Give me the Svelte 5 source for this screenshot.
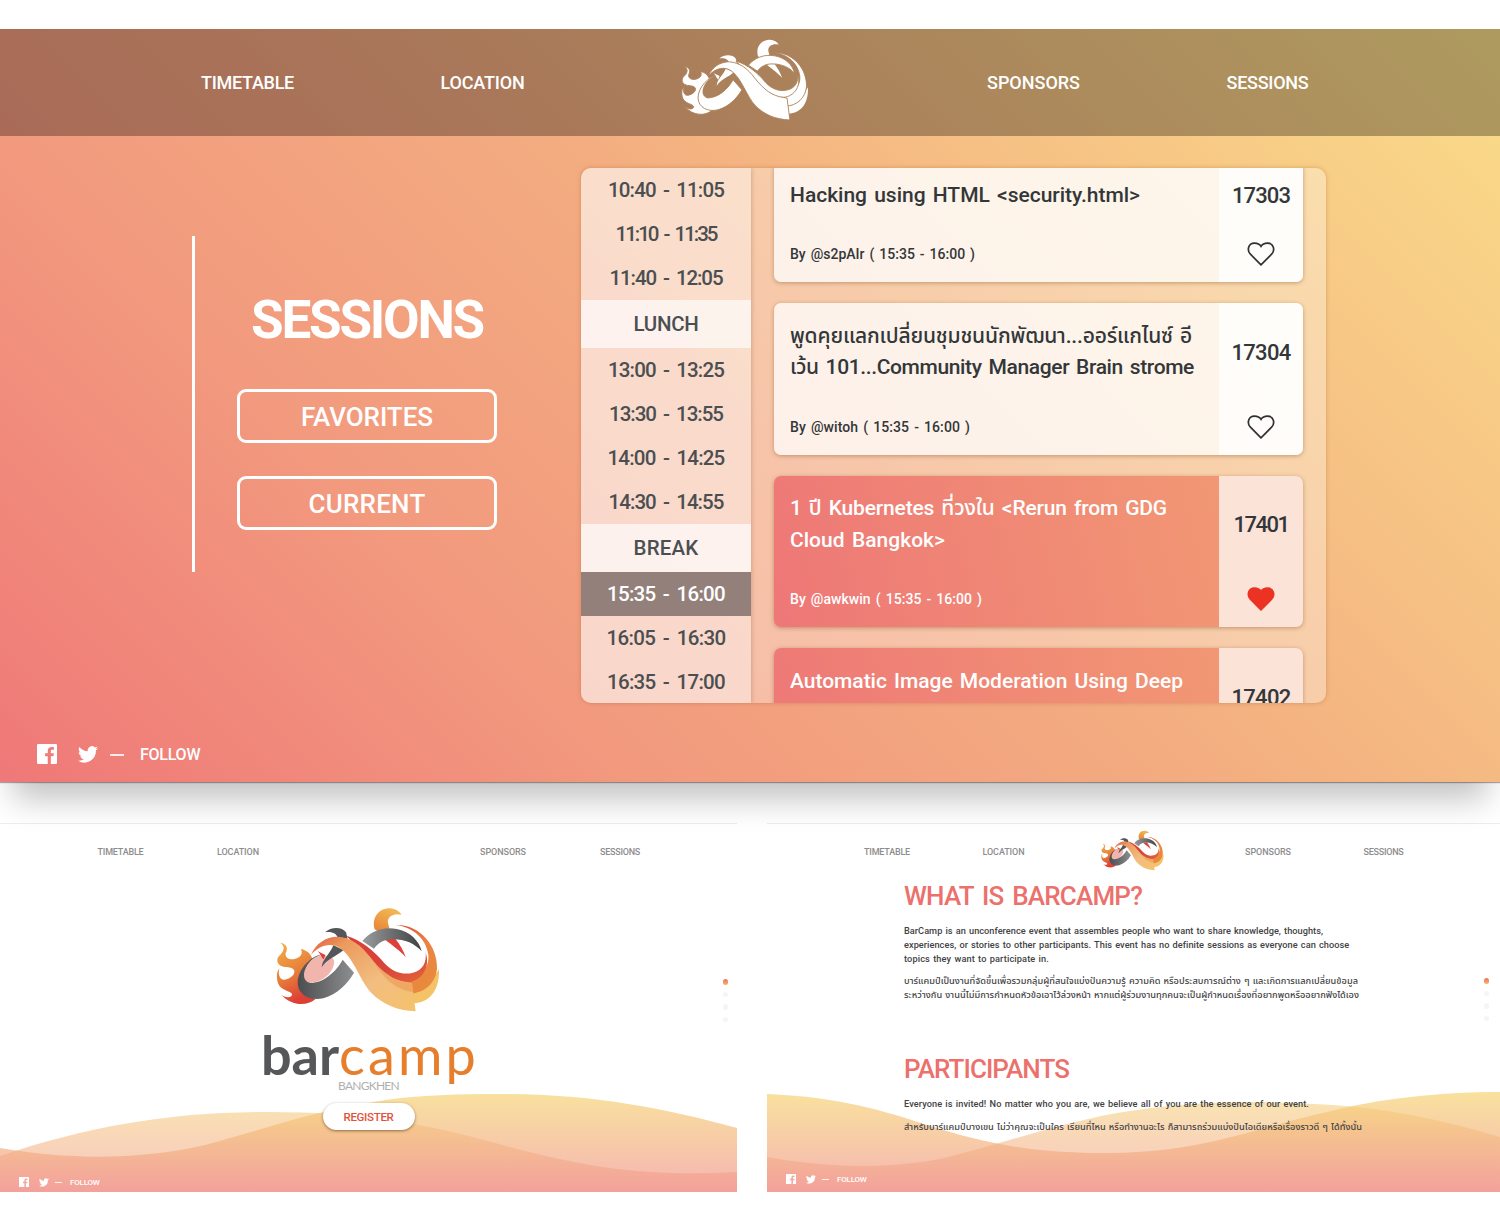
<script>
  const slots = [
    { t: '10:40 - 11:05', w: 116 },
    { t: '11:10 - 11:35', w: 101 },
    { t: '11:40 - 12:05', w: 113 },
    { t: 'LUNCH', w: 65, kind: 'pause' },
    { t: '13:00 - 13:25', w: 116 },
    { t: '13:30 - 13:55', w: 114 },
    { t: '14:00 - 14:25', w: 117 },
    { t: '14:30 - 14:55', w: 115 },
    { t: 'BREAK', w: 65, kind: 'pause' },
    { t: '15:35 - 16:00', w: 118, kind: 'active' },
    { t: '16:05 - 16:30', w: 119 },
    { t: '16:35 - 17:00', w: 118 }
  ];

  const talks = [
    { room: '17303', rw: 58, lines: [['Hacking using HTML <security.html>', 350]], by: 'By @s2pAIr ( 15:35 - 16:00 )', bw: 185 },
    {
      room: '17304', rw: 59,
      lines: [
        ['พูดคุยแลกเปลี่ยนชุมชนนักพัฒนา...ออร์แกไนซ์ อี', 402],
        ['เว้น 101...Community Manager Brain strome', 404]
      ],
      by: 'By @witoh ( 15:35 - 16:00 )', bw: 180
    },
    {
      room: '17401', rw: 55, fav: true,
      lines: [['1 ปี Kubernetes ที่วงใน <Rerun from GDG', 377], ['Cloud Bangkok>', 155]],
      by: 'By @awkwin ( 15:35 - 16:00 )', bw: 192
    },
    {
      room: '17402', rw: 59, fav: true,
      lines: [['Automatic Image Moderation Using Deep', 393]]
    }
  ];

  const about = [
    ['BarCamp is an unconference event that assembles people who want to share knowledge, thoughts,', 419],
    ['experiences, or stories to other participants. This event has no definite sessions as everyone can choose', 445],
    ['topics they want to participate in.', 145]
  ];
  const aboutThai = [
    ['บาร์แคมป์เป็นงานที่จัดขึ้นเพื่อรวมกลุ่มผู้ที่สนใจแบ่งปันความรู้ ความคิด หรือประสบการณ์ต่าง ๆ และเกิดการแลกเปลี่ยนข้อมูล', 454],
    ['ระหว่างกัน งานนี้ไม่มีการกำหนดหัวข้อเอาไว้ล่วงหน้า หากแต่ผู้ร่วมงานทุกคนจะเป็นผู้กำหนดเรื่องที่อยากพูดหรืออยากฟังได้เอง', 455]
  ];

  // Tracks a line of text so that it fills the given width.
  function fit(node, width) {
    const base = node.getBoundingClientRect().width;
    node.style.letterSpacing = '1px';
    const gaps = node.getBoundingClientRect().width - base;
    node.style.letterSpacing = gaps ? `${(width - base) / gaps}px` : '0';
  }
</script>

{#snippet emblem(kind)}
  <svg class="emblem {kind}" viewBox="78 52 492 316">
    <path class="flame" d="M90 158C110 161 115 174 107 190C105 203 118 209 130 208C150 204 160 194 153 177C172 181 182 192 187 206L150 260L158 306L196 328C170 350 122 347 95 315C112 327 128 321 126 312C122 303 100 302 88 287C77 270 79 245 88 235C83 255 91 271 104 269C124 265 137 252 132 240C124 228 104 236 90 226C79 218 79 203 91 194C104 181 105 166 90 158Z" />
    <path class="blush" d="M215 197C240 193 256 204 252 222C244 260 200 283 175 278C156 270 161 240 172 225C185 206 200 199 215 197Z" />
    <path class="ring" d="M226 192C184 192 143 238 143 280C145 316 180 334 220 325C262 312 292 282 312 248L278 209C258 246 220 279 180 279C158 274 157 248 173 223C186 205 205 195 226 192Z" />
    <path class="hook" d="M225 127C243 110 276 110 288 127L293 146L262 141C260 132 246 123 225 127Z" />
    <path class="hook" d="M250 166L281 180C258 200 230 207 215 232C216 208 240 193 250 166Z" />
    <path class="spark" d="M202 183L226 195L221 208C213 203 214 193 202 183Z" />
    <path class="hair" d="M374 118C364 82 388 54 420 55C435 56 449 64 454 74C430 68 411 80 414 99L418 114L390 128Z" />
    <path class="spark" d="M403 147L436 146C450 164 462 184 467 202C453 184 430 169 403 147Z" />
    <path class="gold" d="M567 238C569 305 537 337 492 340L480 288C526 284 551 265 567 238Z" />
    <path class="orange" d="M438 105C510 103 563 168 561 235C558 278 524 310 480 311L440 262C500 272 540 240 535 194C528 146 490 112 438 105Z" />
    <path class="red" d="M289 137C335 151 372 182 402 218C431 250 463 255 489 248C520 240 530 215 527 188C544 236 509 280 462 277C405 271 360 210 289 137Z" />
    <path class="arc" d="M337 153C360 125 398 109 440 117C480 125 507 151 515 184C494 160 462 147 425 148C402 149 385 158 372 176Z" />
    <path class="ribbon" d="M183 195C196 160 230 139 264 140C304 143 334 166 361 202C397 248 430 272 472 277L486 280L497 364C440 362 398 343 365 310C330 274 312 203 270 174C240 155 205 168 183 195Z" />
    <path class="fold" d="M264 140C326 143 358 198 395 250C420 282 450 300 489 307L488 281C430 276 395 247 361 202C334 166 304 143 264 140Z" />
  </svg>
{/snippet}

{#snippet follow()}
  <div class="follow">
    <svg class="fb" viewBox="0 0 24 24"><path d="M1.3 0H22.7Q24 0 24 1.3V22.7Q24 24 22.7 24H16.6V14.7H19.7L20.2 11.1H16.6V8.8C16.6 7.7 16.9 7 18.4 7H20.3V3.8C20 3.7 18.8 3.6 17.5 3.6C14.7 3.6 12.9 5.3 12.9 8.4V11.1H9.7V14.7H12.9V24H1.3Q0 24 0 22.7V1.3Q0 0 1.3 0Z" /></svg>
    <svg class="tw" viewBox="0 0 24 20"><path d="M24 2.4a10 10 0 0 1-2.8.8A5 5 0 0 0 23.3.5a10 10 0 0 1-3.1 1.2 4.9 4.9 0 0 0-8.4 4.5A14 14 0 0 1 1.7 1.1a4.9 4.9 0 0 0 1.5 6.5A5 5 0 0 1 1 7a4.9 4.9 0 0 0 3.9 4.9 5 5 0 0 1-2.2.1 4.9 4.9 0 0 0 4.6 3.4A9.9 9.9 0 0 1 0 17.5 14 14 0 0 0 21.5 5 10 10 0 0 0 24 2.4Z" /></svg>
    <i></i>
    <b>FOLLOW</b>
  </div>
{/snippet}

{#snippet links(widths)}
  <span><b use:fit={widths[0]}>TIMETABLE</b></span>
  <span><b use:fit={widths[1]}>LOCATION</b></span>
{/snippet}

{#snippet linksRight(widths)}
  <span><b use:fit={widths[0]}>SPONSORS</b></span>
  <span><b use:fit={widths[1]}>SESSIONS</b></span>
{/snippet}

<svg class="defs" aria-hidden="true">
  <defs>
    <linearGradient id="g-flame" x1="0" y1="0" x2=".35" y2="1"><stop offset="0" stop-color="#f2b04a" /><stop offset=".55" stop-color="#e8813b" /><stop offset="1" stop-color="#dd3f35" /></linearGradient>
    <linearGradient id="g-ring"><stop offset="0" stop-color="#4c4d4f" /><stop offset="1" stop-color="#8d8e90" /></linearGradient>
    <linearGradient id="g-arc"><stop offset="0" stop-color="#9b9c9e" /><stop offset="1" stop-color="#3f4042" /></linearGradient>
    <linearGradient id="g-hair" x1="0" y1="1" x2=".5" y2="0"><stop offset="0" stop-color="#e67f35" /><stop offset="1" stop-color="#f1b653" /></linearGradient>
    <linearGradient id="g-ribbon" x1="0" y1="0" x2="1" y2="1"><stop offset="0" stop-color="#e5553c" /><stop offset=".2" stop-color="#eb9a5c" /><stop offset=".6" stop-color="#f2bd80" /><stop offset="1" stop-color="#f5c26c" /></linearGradient>
    <linearGradient id="g-red" x1="0" y1="0" x2="1" y2="1"><stop offset="0" stop-color="#de3a37" /><stop offset=".6" stop-color="#d9453a" /><stop offset="1" stop-color="#e2663b" /></linearGradient>
    <linearGradient id="g-orange" x1="0" y1="0" x2=".6" y2="1"><stop offset="0" stop-color="#df4b37" /><stop offset=".5" stop-color="#e98442" /><stop offset="1" stop-color="#e98a3c" /></linearGradient>
    <linearGradient id="g-wave" gradientUnits="userSpaceOnUse" x1="0" y1="0" x2="0" y2="100"><stop offset="0" stop-color="#f6d370" /><stop offset=".7" stop-color="#f2a585" /><stop offset="1" stop-color="#f1918b" /></linearGradient>
  </defs>
</svg>

<main>
  <section class="hero">
    <nav class="top">
      {@render links([93, 84])}
      <div class="mark">{@render emblem('white')}</div>
      {@render linksRight([93, 82])}
    </nav>
    <div class="stage">
      <aside>
        <h1><span use:fit={232}>SESSIONS</span></h1>
        <button><span use:fit={132}>FAVORITES</span></button>
        <button><span use:fit={117}>CURRENT</span></button>
      </aside>
      <div class="panel">
        <div class="slots">
          {#each slots as s}
            <div class="slot {s.kind ?? ''}"><span use:fit={s.w}>{s.t}</span></div>
          {/each}
        </div>
        <div class="talks">
          {#each talks as k}
            <article class:fav={k.fav}>
              <div class="info">
                <h2>{#each k.lines as [t, w]}<span class="line"><span use:fit={w}>{t}</span></span>{/each}</h2>
                {#if k.by}<p><span use:fit={k.bw}>{k.by}</span></p>{/if}
              </div>
              <div class="side">
                <div class="room"><span use:fit={k.rw}>{k.room}</span></div>
                <svg viewBox="0 0 28 24"><path d="M14 22.8L3.4 12.2C-.2 8.4 1 1.2 7.5 1.2C10.5 1.2 12.6 2.2 14 4.4C15.4 2.2 17.5 1.2 20.5 1.2C27 1.2 28.2 8.4 24.6 12.2Z" /></svg>
              </div>
            </article>
          {/each}
        </div>
      </div>
    </div>
    {@render follow()}
  </section>

  <div class="pages">
    <section class="page home">
      <nav>
        {@render links([46, 42])}
        <div></div>
        {@render linksRight([46, 40])}
      </nav>
      <div class="brand">
        {@render emblem('big')}
        <div class="word"><span class="bar" use:fit={78}>bar</span><span class="camp" use:fit={140}>camp</span></div>
        <div class="place"><span use:fit={61}>BANGKHEN</span></div>
        <button class="register"><span use:fit={50}>REGISTER</span></button>
      </div>
      <svg class="waves" viewBox="0 0 737 100" preserveAspectRatio="none">
        <path class="soft" d="M0 64C90 34 170 20 270 20C360 20 420 31 480 47C560 68 620 86 737 80V100H0Z" />
        <path class="deep" d="M0 56C70 68 140 68 205 53C270 36 300 22 385 8C420 3 460 2 500 2C590 2 660 15 737 36V100H0Z" />
      </svg>
      <div class="dots"><i></i><i></i><i></i><i></i></div>
      {@render follow()}
    </section>

    <section class="page what">
      <nav>
        {@render links([46, 42])}
        <div class="mark">{@render emblem('small')}</div>
        {@render linksRight([46, 40])}
      </nav>
      <svg class="waves" viewBox="0 0 733 100" preserveAspectRatio="none">
        <path class="soft" d="M0 65C60 76 130 78 185 64C240 50 290 32 350 21C440 6 520 9 590 15C645 21 690 32 733 45V100H0Z" />
        <path class="deep" d="M0 2C75 5 120 20 160 33C220 52 270 62 345 61C440 60 490 35 560 20C610 7 670 0 733 0V100H0Z" />
      </svg>
      <div class="copy">
        <h3><span use:fit={238}>WHAT IS BARCAMP?</span></h3>
        <p>{#each about as [t, w]}<span class="line"><span use:fit={w}>{t}</span></span>{/each}</p>
        <p class="thai">{#each aboutThai as [t, w]}<span class="line"><span use:fit={w}>{t}</span></span>{/each}</p>
        <h3 class="second"><span use:fit={165}>PARTICIPANTS</span></h3>
        <p><span class="line"><span use:fit={405}>Everyone is invited! No matter who you are, we believe all of you are the essence of our event.</span></span></p>
        <p class="thai"><span class="line"><span use:fit={458}>สำหรับบาร์แคมป์บางเขน ไม่ว่าคุณจะเป็นใคร เรียนที่ไหน หรือทำงานอะไร ก็สามารถร่วมแบ่งปันไอเดียหรือเรื่องราวดี ๆ ได้ทั้งนั้น</span></span></p>
      </div>
      <div class="dots"><i></i><i></i><i></i><i></i></div>
      {@render follow()}
    </section>
  </div>
</main>

<style>
  :global(body) { margin: 0; background: #fff; }
  * { box-sizing: border-box; }
  .defs { position: absolute; width: 0; height: 0; }
  main {
    width: 1500px; height: 1232px; padding-top: 29px; overflow: hidden;
    display: flex; flex-direction: column;
    font-family: Roboto, 'Noto Sans', 'Noto Sans Thai', sans-serif; color: #3b3d3e;
  }
  span, b { white-space: pre; }
  h1, h2, h3, p { margin: 0; font-weight: 500; }
  button { font: inherit; color: inherit; padding: 0; }

  .hero {
    flex: none; height: 753px; display: flex; flex-direction: column;
    background: linear-gradient(45deg, #ef7878, #f2997e 28%, #f3ab80 52%, #fadd89);
    box-shadow: 0 30px 30px -13px rgba(0, 0, 0, .24), 0 1px 1px rgba(60, 40, 40, .4);
    color: #fff;
  }
  .top {
    height: 107px; display: grid; grid-template-columns: 235px 235px 316px 235px 233px;
    padding-left: 130px; align-items: center; background: rgba(0, 0, 0, .3);
    font-size: 18px; text-align: center;
  }
  nav b { font-weight: 500; display: inline-block; }
  .top span { margin-top: -1px; }
  .top .mark { padding-left: 81px; display: flex; margin-top: -6px; }

  .emblem { display: block; }
  .emblem.white { width: 128px; height: 82px; }
  .emblem.big { width: 164px; height: 106px; }
  .emblem.small { width: 63px; height: 41px; }
  .flame { fill: url(#g-flame); }
  .blush { fill: #f2b5ae; }
  .ring { fill: url(#g-ring); }
  .hook { fill: #55565a; }
  .spark { fill: #e0403a; }
  .hair { fill: url(#g-hair); }
  .gold { fill: #f4c368; }
  .orange { fill: url(#g-orange); }
  .red { fill: url(#g-red); }
  .arc { fill: url(#g-arc); }
  .ribbon { fill: url(#g-ribbon); }
  .fold { fill: #eb9350; opacity: .55; }
  .white path { fill: #fff; stroke: #ab825b; stroke-width: 3.5; }
  .white .blush { fill: #ab825b; stroke: none; }
  .white .hook, .white .hair, .white .spark, .white .gold { stroke: none; }
  .white .fold { display: none; }

  .stage { display: flex; padding: 32px 0 0 192px; height: 590px; }
  aside {
    width: 305px; height: 336px; margin: 68px 84px 0 0; border-left: 3px solid #fff;
    padding: 54px 0 0 42px; display: flex; flex-direction: column; align-items: stretch;
  }
  h1 { font-size: 53px; font-weight: 700; line-height: 60px; text-align: center; margin-bottom: 39px; }
  h1 span, button span { display: inline-block; }
  aside button {
    height: 54px; margin-bottom: 33px; border: 3px solid #fff; border-radius: 9px;
    background: none; font-size: 26px; font-weight: 500; flex: none;
  }
  aside button span { padding-top: 2px; }
  .panel {
    width: 745px; height: 535px; border-radius: 10px; overflow: hidden; display: flex;
    background: rgba(255, 255, 255, .32); box-shadow: 0 0 4px rgba(150, 80, 30, .35); color: #4b4f51;
  }
  .slots { width: 170px; background: rgba(255, 255, 255, .4); font-size: 20.5px; word-spacing: 3px; font-weight: 500; box-shadow: 1px 0 4px rgba(150, 90, 50, .3); }
  .slot { height: 44px; display: flex; align-items: center; justify-content: center; }
  .slot span { padding-bottom: 1px; }
  .slot.pause { height: 48px; background: rgba(255, 255, 255, .65); }
  .slot.active { background: #94807a; color: #fff; }
  .talks { padding-left: 23px; margin-top: -6px; display: flex; flex-direction: column; gap: 21px; }
  article {
    width: 529px; flex: none; display: flex; border-radius: 7px; overflow: hidden;
    background: rgba(255, 255, 255, .75); box-shadow: 0 1px 4px rgba(130, 80, 40, .45); color: #333739;
  }
  article:last-child { height: 152px; }
  .info { width: 445px; padding: 17.5px 0 0 16px; }
  .line { display: block; }
  .line span, p span { display: inline-block; }
  h2 { font-size: 21px; line-height: 31.5px; word-spacing: 2px; }
  .info p { font-size: 14px; line-height: 20px; padding: 33px 0 18px; word-spacing: 1.5px; }
  .side { width: 84px; background: rgba(255, 255, 255, .75); display: flex; flex-direction: column; align-items: center; }
  .room { flex: 1; display: flex; align-items: center; font-size: 22px; font-weight: 500; }
  .side svg { width: 28px; height: 24px; margin-bottom: 16px; fill: none; stroke: #2e3132; stroke-width: 1.7; flex: none; }
  .fav { background: linear-gradient(75deg, #ee7777, #f29d73); color: #fff; }
  .fav .side { color: #333739; background: #fbe3d8; }
  .fav .side svg { fill: #ec3223; stroke: #ec3223; }
  .room span { margin-bottom: 13px; }

  .follow { display: flex; align-items: center; padding-left: 37px; height: 20px; margin-top: 18px; color: #fff; }
  .follow svg { fill: currentColor; flex: none; }
  .fb { width: 20px; height: 20px; }
  .tw { width: 20px; height: 17px; margin-left: 21px; }
  .follow i { width: 14px; height: 2px; margin: 2px 16px 0 12px; background: rgba(255, 255, 255, .85); }
  .follow b { font-size: 16px; font-weight: 500; letter-spacing: -.25px; }

  .pages { display: grid; grid-template-columns: 737px 733px; gap: 30px; margin-top: 41px; }
  .page { position: relative; height: 369px; border-top: 1px solid rgba(0, 0, 0, .07); display: flex; flex-direction: column; }
  .page nav { display: grid; align-items: center; height: 55px; text-align: center; font-size: 9px; color: #8d8d8d; flex: none; }
  .page nav b { font-weight: 500; }
  .home nav { grid-template-columns: 117px 118px 147px 118px 116px; padding-left: 62px; }
  .what nav { grid-template-columns: 116px 117px 148px 116px 115px; padding-left: 62px; }
  .what .mark { padding-left: 39px; margin-top: -2px; }
  .waves { position: absolute; left: 0; bottom: 0; width: 100%; height: 100px; }
  .waves path { fill: url(#g-wave); }
  .soft { opacity: .55; }
  .deep { opacity: .68; }
  .brand { position: relative; z-index: 1; display: flex; flex-direction: column; align-items: center; padding-top: 28px; }
  .brand .emblem { margin-left: -21px; }
  .word { font-family: Lato, sans-serif; font-size: 54px; line-height: 54px; height: 54px; display: flex; margin: 15px 0 0 3px; }
  .bar { font-weight: 700; color: #555759; }
  .camp { color: #e67e2b; }
  .place { font: 400 12px/14px Lato, sans-serif; color: #b0b0b0; margin-top: -3px; display: flex; }
  .register {
    width: 92px; height: 27px; border: 0; border-radius: 14px; background: #fff; margin-top: 10px;
    color: #e2513c; font-size: 11.5px; font-weight: 500; box-shadow: 0 1px 3px rgba(80, 50, 20, .6);
  }
  .register span { padding-top: 1px; }
  .dots { position: absolute; right: 9px; top: 155px; display: flex; flex-direction: column; gap: 7px; }
  .what .dots { top: 154px; right: 11px; }
  .dots i { width: 5.5px; height: 5.5px; border-radius: 50%; background: #f5f5f5; }
  .dots i:first-child { background: linear-gradient(#ee6f66, #f6b95f); }
  .copy { position: relative; padding: 1px 0 0 137px; color: #3f4243; font-size: 9.2px; word-spacing: .8px; }
  .copy .line { height: 13.8px; line-height: 13.8px; }
  .copy p { font-weight: 500; margin-bottom: 9px; }
  h3 { font-size: 26px; line-height: 32px; height: 32px; color: #ec706c; margin-bottom: 12px; word-spacing: 3px; }
  h3 span { display: inline-block; }
  .second { margin-top: 51px; }
  .page .follow { position: relative; margin-top: auto; height: 10px; margin-bottom: 5px; padding-left: 19px; }
  .what .follow { margin-bottom: 8px; }
  .page .fb { width: 10px; height: 10px; }
  .page .tw { width: 10px; height: 9px; margin-left: 10px; }
  .page .follow i { width: 7px; height: 1px; margin: 1px 8px 0 6px; }
  .page .follow b { font-size: 8px; letter-spacing: -.2px; }
</style>
